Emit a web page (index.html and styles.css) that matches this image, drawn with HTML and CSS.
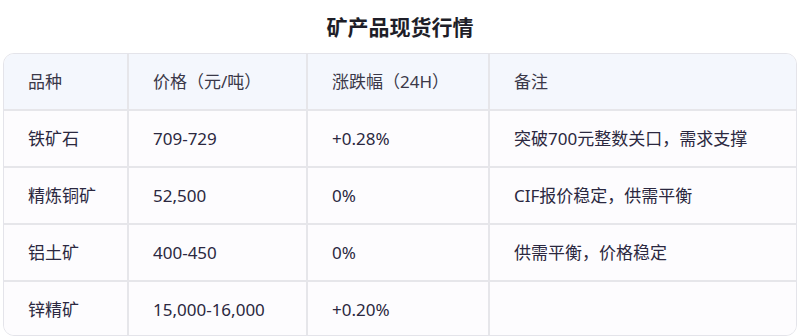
FILE: index.html
```html
<!DOCTYPE html>
<html lang="zh-CN">
<head>
<meta charset="utf-8">
<link rel="stylesheet" href="styles.css">
</head>
<body>
<div class="page">
  <h1 class="title">矿产品现货行情</h1>
  <div class="table-wrap">
    <table class="quote-table">
      <colgroup>
        <col class="c1"><col class="c2"><col class="c3"><col class="c4">
      </colgroup>
      <thead>
        <tr><th>品种</th><th>价格（元/吨）</th><th>涨跌幅（24H）</th><th>备注</th></tr>
      </thead>
      <tbody>
        <tr><td>铁矿石</td><td>709-729</td><td>+0.28%</td><td>突破700元整数关口，需求支撑</td></tr>
        <tr><td>精炼铜矿</td><td>52,500</td><td>0%</td><td>CIF报价稳定，供需平衡</td></tr>
        <tr><td>铝土矿</td><td>400-450</td><td>0%</td><td>供需平衡，价格稳定</td></tr>
        <tr><td>锌精矿</td><td>15,000-16,000</td><td>+0.20%</td><td></td></tr>
      </tbody>
    </table>
  </div>
</div>
</body>
</html>
```

FILE: styles.css
```css
html, body {
  margin: 0;
  padding: 0;
  background: #ffffff;
}
.page {
  padding: 0 3px;
  font-family: "Noto Sans", "Noto Sans CJK SC", sans-serif;
  color: #2b2840;
}
.title {
  margin: 0;
  padding-top: 14px;
  height: 39px;
  box-sizing: border-box;
  text-align: center;
  font-size: 21px;
  line-height: 26px;
  font-weight: 700;
  color: #1e1e28;
}
.table-wrap {
  border: 1px solid #e4e4ea;
  border-radius: 11px;
  overflow: hidden;
  margin-top: 14px;
}
.quote-table {
  width: 100%;
  border-collapse: collapse;
  table-layout: fixed;
  font-size: 17px;
  line-height: 24px;
}
.c1 { width: 124px; }
.c2 { width: 179px; }
.c3 { width: 182px; }
.quote-table th,
.quote-table td {
  text-align: left;
  padding: 15.5px 24px;
  border: 2px solid #e6e6ea;
  font-weight: 400;
  white-space: nowrap;
}
.quote-table thead th { padding: 16px 24px 15px; }
.quote-table tr > :first-child { border-left: none; }
.quote-table tr > :last-child { border-right: none; }
.quote-table thead th { border-top: none; background: #f4f7fd; color: #3a3848; }
.quote-table tbody tr:last-child td { border-bottom: none; padding-bottom: 13px; }
.quote-table tbody td { background: #fdfcfe; }
```
